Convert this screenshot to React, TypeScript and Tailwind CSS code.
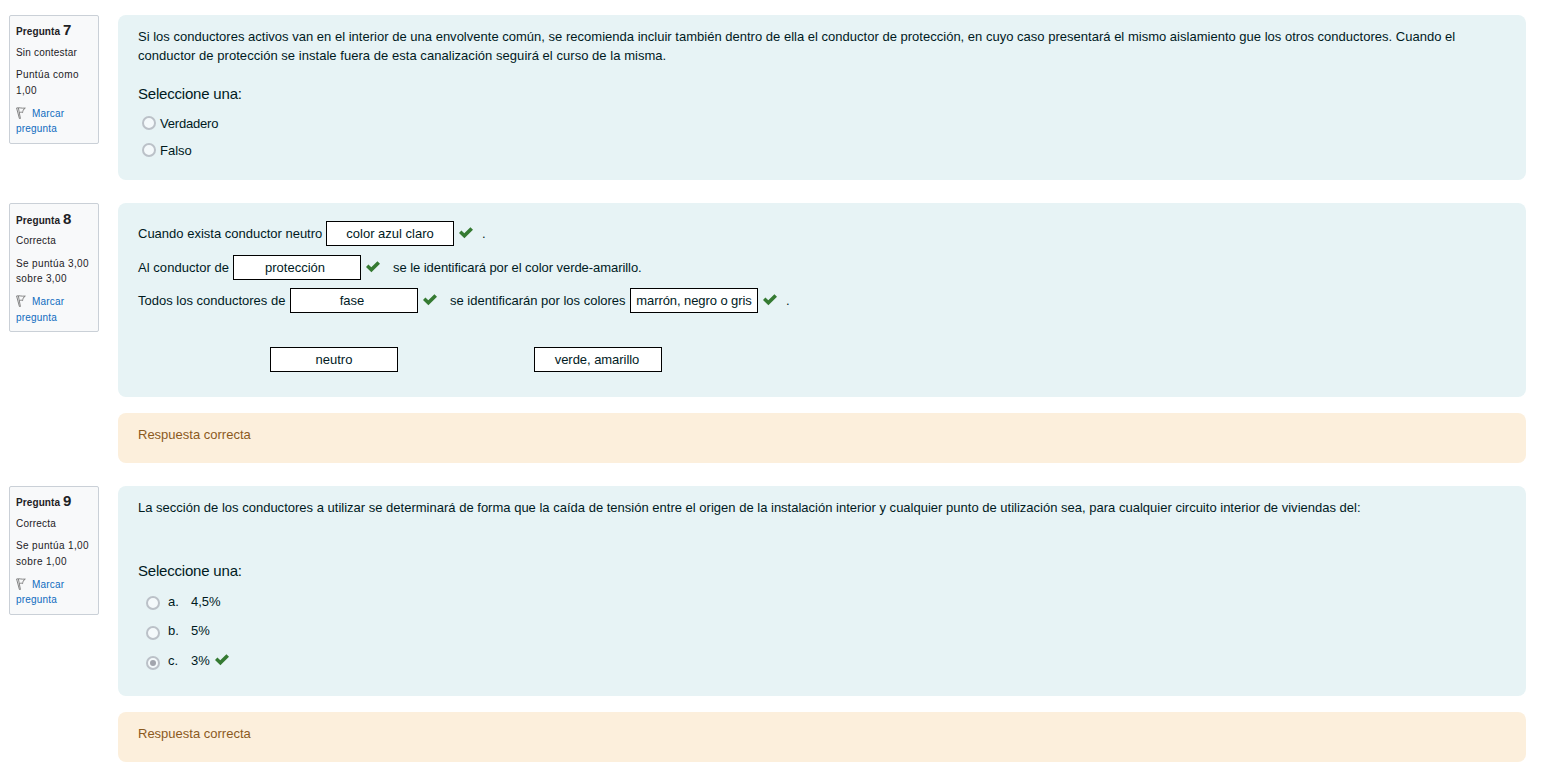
import React from "react";

function Check() {
  return (
    <svg width="14" height="12" viewBox="0 0 14 12" className="block shrink-0">
      <path d="M0 5.9 2.4 3.6l2.9 2.6L11.4.2 14 2.7 5.4 11.2Z" fill="#357a32" />
    </svg>
  );
}

function Flag() {
  return (
    <svg width="10" height="12" viewBox="0 0 10 12" className="mr-[6px] inline-block align-[-2px]" fill="none" stroke="#777" strokeWidth="0.9">
      <path d="M.6 1 3.4 11.5H4.4L2.4 1M.5 1C3 .2 5 1.5 9.3 1.1 7.3 2.2 6.8 3.8 6.6 5.6 5.4 4.9 4.6 5.2 3.4 5.5" />
    </svg>
  );
}

interface InfoProps {
  num: number;
  state: string;
  grade: [string, string];
  low?: boolean;
}

function Info({ num, state, grade, low = false }: InfoProps) {
  return (
    <aside className="h-[129px] w-[90px] shrink-0 rounded-[2px] border border-[#cad0d7] bg-[#f8f9fa] pl-[6px] pt-[5px] text-[10px] leading-[15px] tracking-[0.2px] text-[#1d2125]">
      <h3 className={low ? "h-[19px] whitespace-nowrap pt-px font-bold leading-[18px] tracking-[0.1px]" : "h-[19px] whitespace-nowrap font-bold leading-[18px] tracking-[0.1px]"}>
        Pregunta <span className="text-[15px] tracking-normal">{num}</span>
      </h3>
      <div className="mt-[5px]">{state}</div>
      <div className={low ? "mt-[8px] whitespace-nowrap tracking-[0.36px]" : "mt-[7px] whitespace-nowrap leading-[16px] tracking-[0.36px]"}>{grade[0]}<br />{grade[1]}</div>
      <div className={low ? "mt-[8px] leading-[16px] text-[#0f6cbf]" : "mt-[7px] text-[#0f6cbf]"}><Flag />Marcar<br />pregunta</div>
    </aside>
  );
}

function Radio({ checked = false }: { checked?: boolean }) {
  return (
    <span className="flex size-[14px] shrink-0 items-center justify-center rounded-full border-2 border-[#bbc1c8] bg-[#f4f9fb]">
      {checked && <span className="size-[6px] rounded-full bg-[#a2a5ad]" />}
    </span>
  );
}

function Drop({ children }: { children: React.ReactNode }) {
  return <span className="flex h-[25px] w-[128px] shrink-0 items-center justify-center whitespace-nowrap border border-black bg-white">{children}</span>;
}

function Feedback() {
  return <div className="mt-4 h-[50px] rounded-lg bg-[#fcefdc] px-5 pt-[12px] leading-[19px] text-[#8b5a1e]">Respuesta correcta</div>;
}

function Question({ info, children }: { info: React.ReactNode; children: React.ReactNode }) {
  return (
    <section className="mb-[23px] flex items-start gap-[19px]">
      {info}
      <div className="w-[1408px]">{children}</div>
    </section>
  );
}

function Option({ letter, text, checked = false }: { letter: string; text: string; checked?: boolean }) {
  return (
    <div className="flex items-start">
      <span className={letter === "a" ? "mt-[4px]" : "mt-[5px]"}><Radio checked={checked} /></span>
      <span className="ml-[8px] w-[23px]">{letter}.</span>
      <span>{text}</span>
      {checked && <span className="ml-[5px] mt-[3px]"><Check /></span>}
    </div>
  );
}

export default function App() {
  return (
    <main className="h-[775px] w-[1552px] overflow-hidden bg-white pl-[9px] pt-[15px] font-['Liberation_Sans',Arial,sans-serif] text-[13px] leading-[19px] text-[#001a1e]">
      <Question info={<Info num={7} state="Sin contestar" grade={["Puntúa como", "1,00"]} />}>
        <div className="h-[165px] rounded-lg bg-[#e7f3f5] px-5 pt-[12px]">
          <p className="whitespace-nowrap tracking-[0.012px]">
            Si los conductores activos van en el interior de una envolvente común, se recomienda incluir también dentro de ella el conductor de protección, en cuyo caso presentará el mismo aislamiento gue los otros conductores. Cuando el<br />
            <span className="tracking-[0.04px]">conductor de protección se instale fuera de esta canalización seguirá el curso de la misma.</span>
          </p>
          <h4 className="mt-[19px] text-[15px] tracking-[-0.2px]">Seleccione una:</h4>
          <div className="mt-[10px] flex items-center gap-1 pl-1"><Radio /><span className="pt-px tracking-[-0.2px]">Verdadero</span></div>
          <div className="mt-[7px] flex items-center gap-1 pl-1"><Radio /><span className="pt-px">Falso</span></div>
        </div>
      </Question>

      <Question info={<Info num={8} state="Correcta" grade={["Se puntúa 3,00", "sobre 3,00"]} low />}>
        <div className="h-[194px] rounded-lg bg-[#e7f3f5] px-5 pt-[18px]">
          <div className="flex h-[25px] items-center whitespace-nowrap">
            <span className="w-[188px]">Cuando exista conductor neutro</span>
            <Drop>color azul claro</Drop>
            <span className="mb-px ml-[5px] mr-[9px]"><Check /></span>
            <span>.</span>
          </div>
          <div className="mt-[9px] flex h-[25px] items-center whitespace-nowrap">
            <span className="w-[95px] tracking-[0.05px]">Al conductor de</span>
            <Drop><span className="pr-[4px]">protección</span></Drop>
            <span className="mb-px ml-[5px] mr-[13px]"><Check /></span>
            <span className="tracking-[-0.06px]">se le identificará por el color verde-amarillo.</span>
          </div>
          <div className="mt-[8px] flex h-[25px] items-center whitespace-nowrap">
            <span className="w-[152px]">Todos los conductores de</span>
            <Drop><span className="pr-[4px]">fase</span></Drop>
            <span className="mb-px ml-[5px] mr-[13px]"><Check /></span>
            <span className="w-[180px]">se identificarán por los colores</span>
            <Drop><span className="tracking-[-0.08px]">marrón, negro o gris</span></Drop>
            <span className="mb-px ml-[5px] mr-[9px]"><Check /></span>
            <span>.</span>
          </div>
          <div className="mt-[34px] flex gap-[136px] pl-[132px]">
            <Drop>neutro</Drop>
            <Drop><span className="pr-[2px] tracking-[-0.05px]">verde, amarillo</span></Drop>
          </div>
        </div>
        <Feedback />
      </Question>

      <Question info={<Info num={9} state="Correcta" grade={["Se puntúa 1,00", "sobre 1,00"]} />}>
        <div className="h-[210px] rounded-lg bg-[#e7f3f5] px-5 pt-[12px]">
          <p className="whitespace-nowrap tracking-[0.006px]">La sección de los conductores a utilizar se determinará de forma que la caída de tensión entre el origen de la instalación interior y cualquier punto de utilización sea, para cualquier circuito interior de viviendas del:</p>
          <h4 className="mt-[44px] text-[15px] tracking-[-0.2px]">Seleccione una:</h4>
          <div className="mt-[12px] flex flex-col gap-[10px] pl-2">
            <Option letter="a" text="4,5%" />
            <Option letter="b" text="5%" />
            <div className="pt-[0.6px]"><Option letter="c" text="3%" checked /></div>
          </div>
        </div>
        <Feedback />
      </Question>
    </main>
  );
}
